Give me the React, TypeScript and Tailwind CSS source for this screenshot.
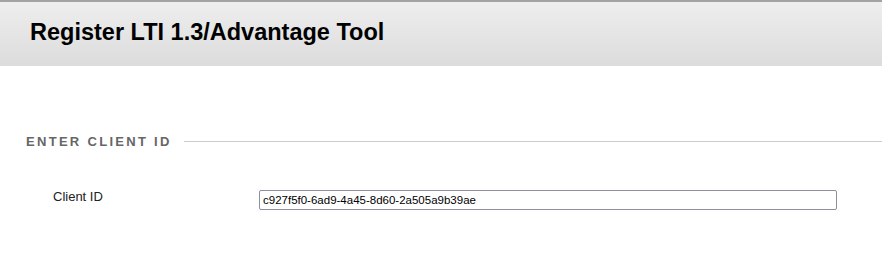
import React from 'react';

const App: React.FC = () => {
  return (
    <div className="w-[882px] h-[257px] bg-white font-['Liberation_Sans',Arial,sans-serif] overflow-hidden">
      <header className="h-[66px] border-t-2 border-[#a3a3a3] bg-gradient-to-b from-[#eeeeee] to-[#dcdcdc] px-[30px] flex items-center">
        <h1 className="text-[23.5px] font-bold text-black leading-none -mt-[2px]">Register LTI 1.3/Advantage Tool</h1>
      </header>

      <section className="pt-[69px] pl-[26px]">
        <div className="flex items-center gap-[12px]">
          <h2 className="text-[13px] font-bold tracking-[2.3px] text-[#666666] uppercase leading-none whitespace-nowrap">
            Enter Client ID
          </h2>
          <div className="flex-1 h-px bg-[#cccccc]" />
        </div>

        <div className="mt-[42px] flex items-center">
          <label htmlFor="clientId" className="w-[233px] pl-[27px] text-[13px] text-[#222222] -mt-[6px]">
            Client ID
          </label>
          <input
            id="clientId"
            type="text"
            defaultValue="c927f5f0-6ad9-4a45-8d60-2a505a9b39ae"
            className="w-[578px] h-[20px] border border-[#8f8f9d] rounded-[2px] px-[3px] text-[11.5px] text-black outline-none bg-white"
          />
        </div>
      </section>
    </div>
  );
};

export default App;
